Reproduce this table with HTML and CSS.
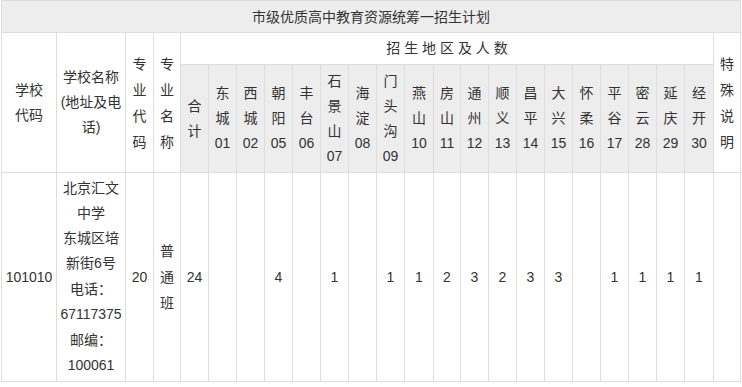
FILE: index.html
```html
<!DOCTYPE html>
<html lang="zh-CN">
<head>
<meta charset="utf-8">
<title>市级优质高中教育资源统筹一招生计划</title>
<link rel="stylesheet" href="styles.css">
</head>
<body>
<table class="plan">
  <colgroup>
    <col class="c-code">
    <col class="c-name">
    <col class="c-w28">
    <col class="c-w27">
    <col class="c-w28"><col class="c-w28"><col class="c-w28"><col class="c-w28"><col class="c-w28">
    <col class="c-w28"><col class="c-w28"><col class="c-w28">
    <col class="c-w29"><col class="c-w27">
    <col class="c-w28"><col class="c-w28"><col class="c-w28"><col class="c-w28"><col class="c-w28">
    <col class="c-w28"><col class="c-w28"><col class="c-w28">
    <col class="c-w29">
    <col class="c-w27">
  </colgroup>
  <thead>
    <tr class="r-title">
      <th colspan="24" class="title">市级优质高中教育资源统筹一招生计划</th>
    </tr>
    <tr class="r-group">
      <th rowspan="2">学校<br>代码</th>
      <th rowspan="2">学校名称<br>(地址及电<br>话)</th>
      <th rowspan="2" class="narrow">专<br>业<br>代<br>码</th>
      <th rowspan="2" class="narrow">专<br>业<br>名<br>称</th>
      <th colspan="19">招 生 地 区 及 人 数</th>
      <th rowspan="2" class="narrow">特<br>殊<br>说<br>明</th>
    </tr>
    <tr class="r-area">
      <th class="area">合<br>计</th>
      <th class="area">东<br>城<br>01</th>
      <th class="area">西<br>城<br>02</th>
      <th class="area">朝<br>阳<br>05</th>
      <th class="area">丰<br>台<br>06</th>
      <th class="area">石<br>景<br>山<br>07</th>
      <th class="area">海<br>淀<br>08</th>
      <th class="area">门<br>头<br>沟<br>09</th>
      <th class="area">燕<br>山<br>10</th>
      <th class="area">房<br>山<br>11</th>
      <th class="area">通<br>州<br>12</th>
      <th class="area">顺<br>义<br>13</th>
      <th class="area">昌<br>平<br>14</th>
      <th class="area">大<br>兴<br>15</th>
      <th class="area">怀<br>柔<br>16</th>
      <th class="area">平<br>谷<br>17</th>
      <th class="area">密<br>云<br>28</th>
      <th class="area">延<br>庆<br>29</th>
      <th class="area">经<br>开<br>30</th>
    </tr>
  </thead>
  <tbody>
    <tr class="r-body">
      <td>101010</td>
      <td class="school">北京汇文中学<br>东城区培新街6号<br>电话<span class="colon">：</span>67117375<br>邮编<span class="colon">：</span>100061</td>
      <td>20</td>
      <td class="narrow">普<br>通<br>班</td>
      <td>24</td>
      <td></td>
      <td></td>
      <td>4</td>
      <td></td>
      <td>1</td>
      <td></td>
      <td>1</td>
      <td>1</td>
      <td>2</td>
      <td>3</td>
      <td>2</td>
      <td>3</td>
      <td>3</td>
      <td></td>
      <td>1</td>
      <td>1</td>
      <td>1</td>
      <td>1</td>
      <td></td>
    </tr>
  </tbody>
</table>
</body>
</html>
```

FILE: styles.css
```css
html, body {
  margin: 0;
  padding: 0;
  background: #fff;
}

body {
  padding-left: 1px;
  font-family: "Liberation Sans", "Noto Sans CJK SC", sans-serif;
  font-size: 14px;
  color: #333;
}

.plan {
  width: 740px;
  table-layout: fixed;
  border-collapse: collapse;
  border: 1px solid #ddd;
}

.c-code { width: 55px; }
.c-name { width: 69px; }
.c-w27 { width: 27px; }
.c-w28 { width: 28px; }
.c-w29 { width: 29px; }

.plan th,
.plan td {
  border: 1px solid #ddd;
  padding: 0;
  font-weight: normal;
  text-align: center;
  vertical-align: middle;
  line-height: 25px;
  word-break: normal;
}

.r-title { height: 32px; }
.r-group { height: 32px; }
.r-area { height: 108px; }
.r-body { height: 209px; }

.plan .title {
  background: #ededed;
  line-height: 20px;
}

.plan .area {
  background: #ededed;
}

.plan .narrow {
  line-height: 26px;
}

.plan .school {
  padding: 0 3px;
  line-height: 25px;
}

.colon {
  font-family: "Noto Sans CJK TC", "Noto Sans CJK SC", sans-serif;
}
```
